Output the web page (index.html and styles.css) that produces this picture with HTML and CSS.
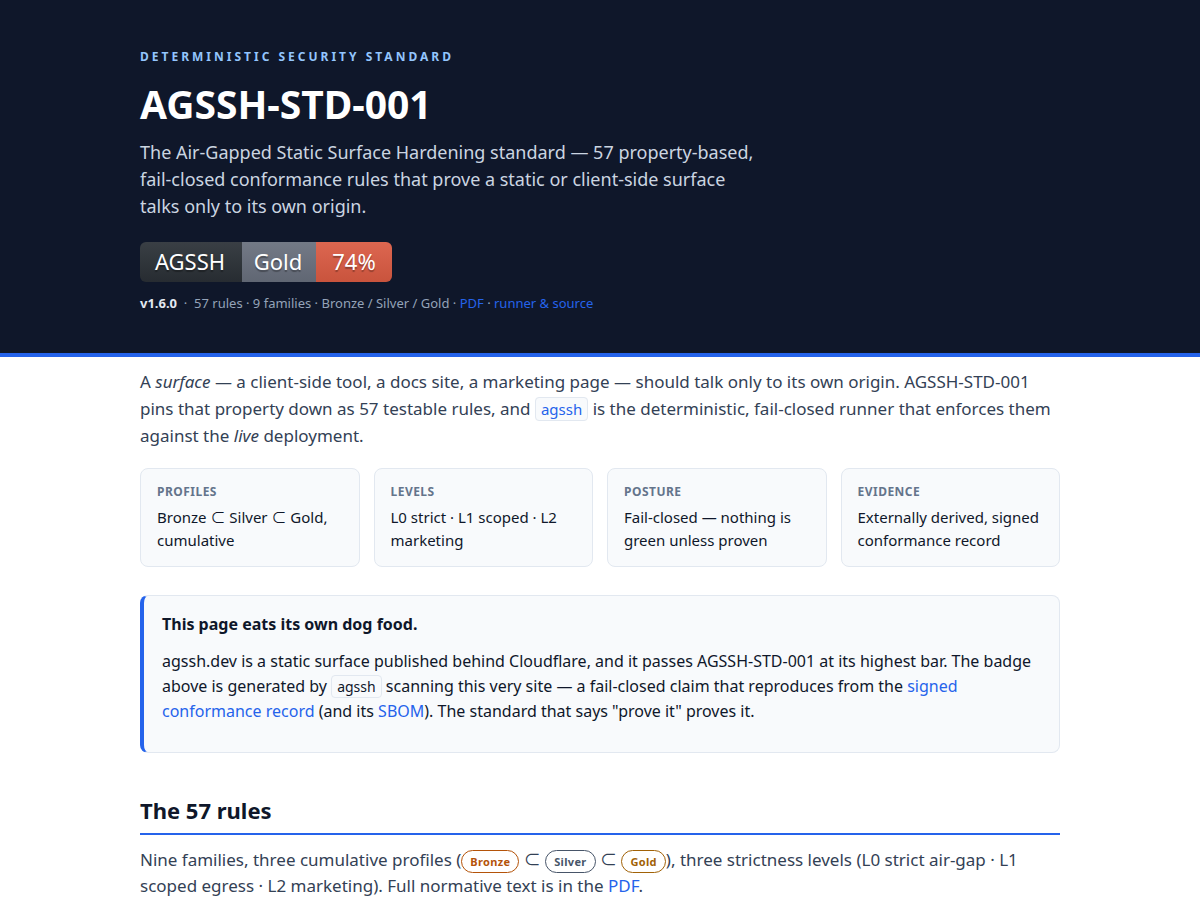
FILE: index.html
```html
<!DOCTYPE html>
<html lang="en">
<head>
    <meta charset="UTF-8">
    <meta name="viewport" content="width=device-width, initial-scale=1">
    <title>AGSSH-STD-001</title>
    <link rel="stylesheet" href="styles.css">
</head>
<body>
    <header>
        <div class="wrap">
            <p class="eyebrow">Deterministic Security Standard</p>
            <h1>AGSSH-STD-001</h1>
            <p class="tagline">The Air-Gapped Static Surface Hardening standard — 57 property-based, fail-closed conformance rules that prove a static or client-side surface talks only to its own origin.</p>
            <a class="badge" href="#record" aria-label="AGSSH Gold 74%">
                <span class="badge-name">AGSSH</span>
                <span class="badge-level">Gold</span>
                <span class="badge-score">74%</span>
            </a>
            <p class="meta"><strong>v1.6.0</strong> &nbsp;·&nbsp; 57 rules · 9 families · Bronze / Silver / Gold · <a href="#pdf">PDF</a> · <a href="#source">runner &amp; source</a></p>
        </div>
    </header>

    <main class="wrap">
        <p class="lead">A <em>surface</em> — a client-side tool, a docs site, a marketing page — should talk only to its own origin. AGSSH-STD-001 pins that property down as 57 testable rules, and <a href="#source"><code>agssh</code></a> is the deterministic, fail-closed runner that enforces them against the <em>live</em> deployment.</p>

        <div class="facts">
            <div class="fact"><div class="key">Profiles</div><div class="value">Bronze ⊂ Silver ⊂ Gold, cumulative</div></div>
            <div class="fact"><div class="key">Levels</div><div class="value">L0 strict · L1 scoped · L2 marketing</div></div>
            <div class="fact"><div class="key">Posture</div><div class="value">Fail-closed — nothing is green unless proven</div></div>
            <div class="fact"><div class="key">Evidence</div><div class="value">Externally derived, signed conformance record</div></div>
        </div>

        <div class="callout">
            <p><strong>This page eats its own dog food.</strong></p>
            <p>agssh.dev is a static surface published behind Cloudflare, and it passes AGSSH-STD-001 at its highest bar. The badge above is generated by <code>agssh</code> scanning this very site — a fail-closed claim that reproduces from the <a href="#record">signed conformance record</a> (and its <a href="#sbom">SBOM</a>). The standard that says "prove it" proves it.</p>
        </div>

        <h2>The 57 rules</h2>
        <p class="lead">Nine families, three cumulative profiles (<span class="pill bronze">Bronze</span> ⊂ <span class="pill silver">Silver</span> ⊂ <span class="pill gold">Gold</span>), three strictness levels (L0 strict air-gap · L1 scoped egress · L2 marketing). Full normative text is in the <a href="#pdf">PDF</a>.</p>
    </main>
</body>
</html>
```

FILE: styles.css
```css
* {
    box-sizing: border-box;
}

body {
    margin: 0;
    font-family: "Noto Sans", "Noto Sans CJK JP", sans-serif;
    font-size: 16px;
    line-height: 25px;
    color: #0f172a;
    background: #fff;
}

a {
    color: #2563eb;
    text-decoration: none;
}

.wrap {
    max-width: 968px;
    margin: 0 auto;
    padding: 0 24px;
}

header {
    background: #0f172a;
    color: #fff;
    padding: 47px 0 39px;
    border-bottom: 4px solid #2563eb;
}

.eyebrow {
    margin: 0 0 13px;
    font-size: 12px;
    line-height: 20px;
    font-weight: 700;
    letter-spacing: 3px;
    text-transform: uppercase;
    color: #93c5fd;
}

h1 {
    margin: 0 0 11px;
    font-size: 39px;
    line-height: 48px;
    font-weight: 700;
}

.tagline {
    max-width: 620px;
    margin: 0 0 22px;
    font-size: 18px;
    line-height: 27px;
    color: #cbd5e1;
}

.badge {
    display: flex;
    width: fit-content;
    height: 40px;
    border-radius: 6px;
    overflow: hidden;
    font-size: 22px;
    line-height: 39px;
    text-align: center;
    color: #fff;
    text-shadow: 0 2px 1px rgba(1, 1, 1, 0.3);
}

.badge span {
    background: linear-gradient(rgba(187, 187, 187, 0.1), rgba(0, 0, 0, 0.1)) #2b3137;
}

.badge .badge-name {
    width: 102px;
    padding-right: 2px;
}

.badge .badge-level {
    width: 74px;
    padding-right: 2px;
    background-color: #6b7280;
}

.badge .badge-score {
    width: 76px;
    background-color: #e05d44;
}

.meta {
    margin: 10px 0 0;
    font-size: 13px;
    line-height: 22px;
    color: #94a3b8;
}

.meta strong {
    color: #e2e8f0;
}

.lead {
    margin: 12px 0 19px;
    font-size: 17px;
    line-height: 26px;
    color: #334155;
}

code {
    padding: 1px 5px;
    font-family: "Noto Sans", sans-serif;
    font-size: 14px;
    line-height: 18px;
    background: #f8fafc;
    border: 1px solid #e2e8f0;
    border-radius: 4px;
}

.lead code {
    font-size: 15px;
    line-height: 28px;
}

.facts {
    display: grid;
    grid-template-columns: repeat(auto-fit, minmax(200px, 1fr));
    gap: 14px;
    margin: 0 0 28px;
}

.fact {
    padding: 13px 16px 14px;
    background: #f8fafc;
    border: 1px solid #e2e8f0;
    border-radius: 8px;
}

.key {
    margin-bottom: 4px;
    font-size: 12px;
    line-height: 20px;
    font-weight: 700;
    letter-spacing: 0.04em;
    text-transform: uppercase;
    color: #64748b;
}

.value {
    font-size: 15px;
    line-height: 23px;
}

.callout {
    padding: 16px 18px 12px;
    background: #f8fafc;
    border: 1px solid #e2e8f0;
    border-left: 4px solid #2563eb;
    border-radius: 8px;
}

.callout p {
    margin: 0 0 12px;
}

.callout p:last-child {
    margin-bottom: 16px;
}

h2 {
    margin: 40px 0 12px;
    padding-bottom: 6px;
    font-size: 22px;
    line-height: 34px;
    border-bottom: 2px solid #2563eb;
}

.pill {
    display: inline-block;
    padding: 0 8px;
    font-size: 11px;
    line-height: 21px;
    font-weight: 700;
    letter-spacing: 0.03em;
    border: 1px solid;
    border-radius: 999px;
}

.bronze {
    color: #b45309;
}

.silver {
    color: #475569;
}

.gold {
    color: #a16207;
}
```
